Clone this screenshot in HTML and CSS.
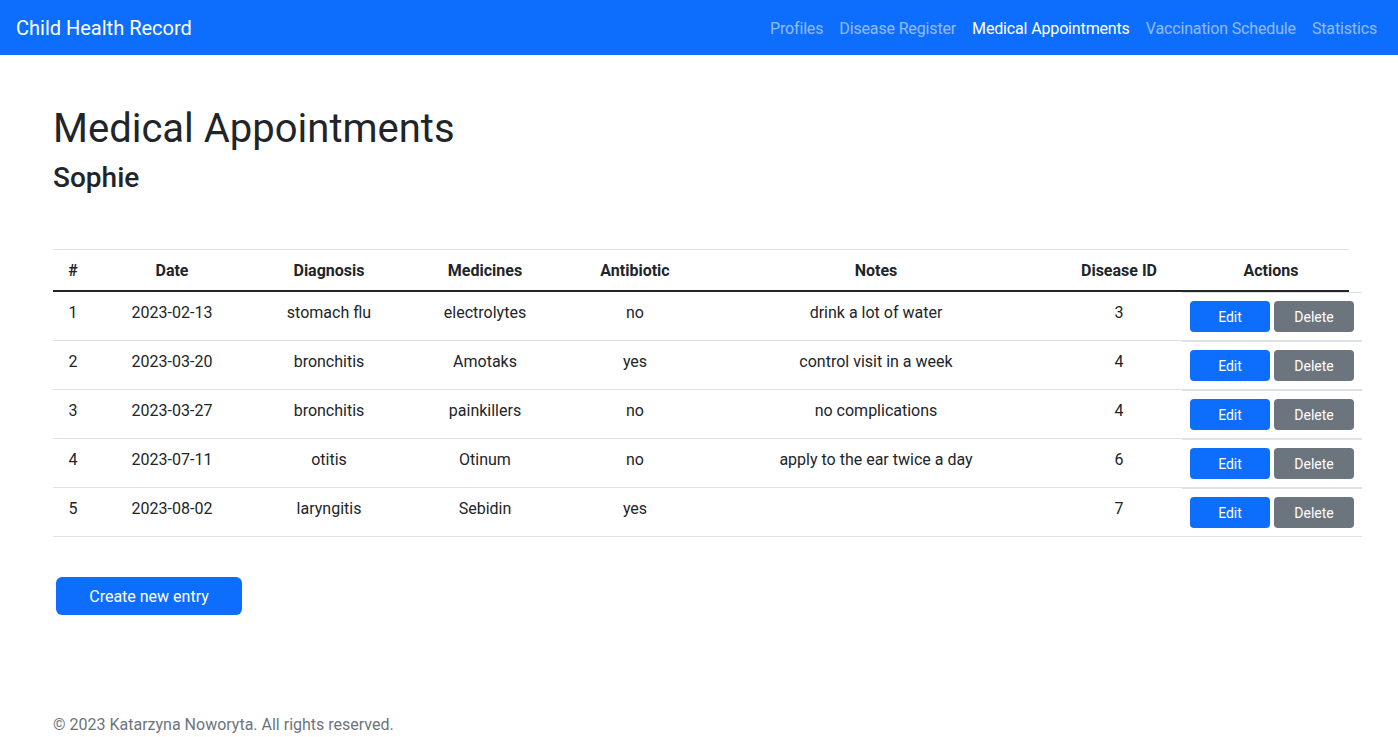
FILE: index.html
```html
<!DOCTYPE html>
<html lang="en">
<head>
<meta charset="utf-8">
<title>Medical Appointments</title>
<link rel="stylesheet" href="styles.css">
</head>
<body>
<nav class="navbar">
  <a class="brand" href="#">Child Health Record</a>
  <ul class="nav-links">
    <li><a class="nav-link" href="#">Profiles</a></li>
    <li><a class="nav-link" href="#">Disease Register</a></li>
    <li><a class="nav-link active" href="#">Medical Appointments</a></li>
    <li><a class="nav-link" href="#">Vaccination Schedule</a></li>
    <li><a class="nav-link" href="#">Statistics</a></li>
  </ul>
</nav>
<main class="content">
  <h1 class="title">Medical Appointments</h1>
  <h2 class="subtitle">Sophie</h2>
  <table class="table">
    <colgroup>
      <col class="c1"><col class="c2"><col class="c3"><col class="c4"><col class="c5"><col class="c6"><col class="c7"><col class="c8">
    </colgroup>
    <thead>
      <tr><th>#</th><th>Date</th><th>Diagnosis</th><th>Medicines</th><th>Antibiotic</th><th>Notes</th><th>Disease ID</th><th>Actions</th></tr>
    </thead>
    <tbody>
      <tr><td>1</td><td>2023-02-13</td><td>stomach flu</td><td>electrolytes</td><td>no</td><td>drink a lot of water</td><td>3</td><td class="actions-cell"><div class="actions"><button class="btn btn-edit">Edit</button><button class="btn btn-delete">Delete</button></div></td></tr>
      <tr><td>2</td><td>2023-03-20</td><td>bronchitis</td><td>Amotaks</td><td>yes</td><td>control visit in a week</td><td>4</td><td class="actions-cell"><div class="actions"><button class="btn btn-edit">Edit</button><button class="btn btn-delete">Delete</button></div></td></tr>
      <tr><td>3</td><td>2023-03-27</td><td>bronchitis</td><td>painkillers</td><td>no</td><td>no complications</td><td>4</td><td class="actions-cell"><div class="actions"><button class="btn btn-edit">Edit</button><button class="btn btn-delete">Delete</button></div></td></tr>
      <tr><td>4</td><td>2023-07-11</td><td>otitis</td><td>Otinum</td><td>no</td><td>apply to the ear twice a day</td><td>6</td><td class="actions-cell"><div class="actions"><button class="btn btn-edit">Edit</button><button class="btn btn-delete">Delete</button></div></td></tr>
      <tr><td>5</td><td>2023-08-02</td><td>laryngitis</td><td>Sebidin</td><td>yes</td><td></td><td>7</td><td class="actions-cell"><div class="actions"><button class="btn btn-edit">Edit</button><button class="btn btn-delete">Delete</button></div></td></tr>
    </tbody>
  </table>
  <button class="btn-create">Create new entry</button>
</main>
<footer class="footer">© 2023 Katarzyna Noworyta. All rights reserved.</footer>
</body>
</html>
```
FILE: styles.css
```css
* { box-sizing: border-box; }

body {
  margin: 0;
  font-family: Roboto, "Open Sans", "Liberation Sans", sans-serif;
  font-size: 16px;
  line-height: 1.5;
  color: #212529;
  background: #fff;
}

.navbar {
  height: 55px;
  background: #0d6efd;
  display: flex;
  align-items: center;
  justify-content: space-between;
  padding: 0 13px 0 16px;
}

.brand {
  color: #fff;
  font-size: 20px;
  line-height: 30px;
  text-decoration: none;
  margin-top: 1px;
}

.nav-links {
  list-style: none;
  margin: 0;
  padding: 0;
  display: flex;
}

.nav-link {
  display: block;
  padding: 9px 8px 7px;
  color: rgba(255, 255, 255, 0.55);
  text-decoration: none;
  font-size: 16px;
  line-height: 24px;
  letter-spacing: -0.15px;
}

.nav-link.active {
  color: #fff;
}

.content {
  padding: 50px 37px 0 53px;
}

.title {
  margin: 0;
  font-size: 40px;
  font-weight: 400;
  line-height: 48px;
}

.subtitle {
  margin: 8px 0 0;
  font-size: 28px;
  font-weight: 500;
  line-height: 34px;
}

.table {
  margin-top: 54px;
  width: 1296px;
  table-layout: fixed;
  border-collapse: separate;
  border-spacing: 0;
}

.c1 { width: 40px; }
.c2 { width: 158px; }
.c3 { width: 156px; }
.c4 { width: 156px; }
.c5 { width: 144px; }
.c6 { width: 338px; }
.c7 { width: 148px; }
.c8 { width: 156px; }

.table th {
  padding: 9px 8px 7px;
  text-align: center;
  font-weight: 700;
  line-height: 24px;
  border-top: 1px solid #dee2e6;
  border-bottom: 2px solid #212529;
}

.table td {
  padding: 9px 8px 7px;
  text-align: center;
  vertical-align: top;
  line-height: 24px;
  border-bottom: 1px solid #dee2e6;
}

.table td.actions-cell {
  padding: 0;
  border-bottom: 0;
}

.actions {
  display: flex;
  gap: 4px;
  width: 180px;
  margin-left: -11px;
  padding: 8px;
  border-top: 1px solid #dee2e6;
  border-bottom: 1px solid #dee2e6;
}

.btn {
  width: 80px;
  height: 31px;
  border: 0;
  border-radius: 4px;
  color: #fff;
  font-family: inherit;
  font-size: 14px;
  line-height: 21px;
  padding: 2px 0 0;
  cursor: pointer;
}

.btn-edit { background: #0d6efd; }
.btn-delete { background: #6c757d; }

.btn-create {
  display: block;
  margin: 40px 0 0 3px;
  width: 186px;
  height: 38px;
  border: 0;
  border-radius: 6px;
  background: #0d6efd;
  color: #fff;
  font-family: inherit;
  font-size: 16px;
  line-height: 24px;
  padding: 2px 0 0;
  cursor: pointer;
}

.footer {
  padding: 98px 0 0 53px;
  color: #6c757d;
  font-size: 16px;
  line-height: 24px;
}
```
